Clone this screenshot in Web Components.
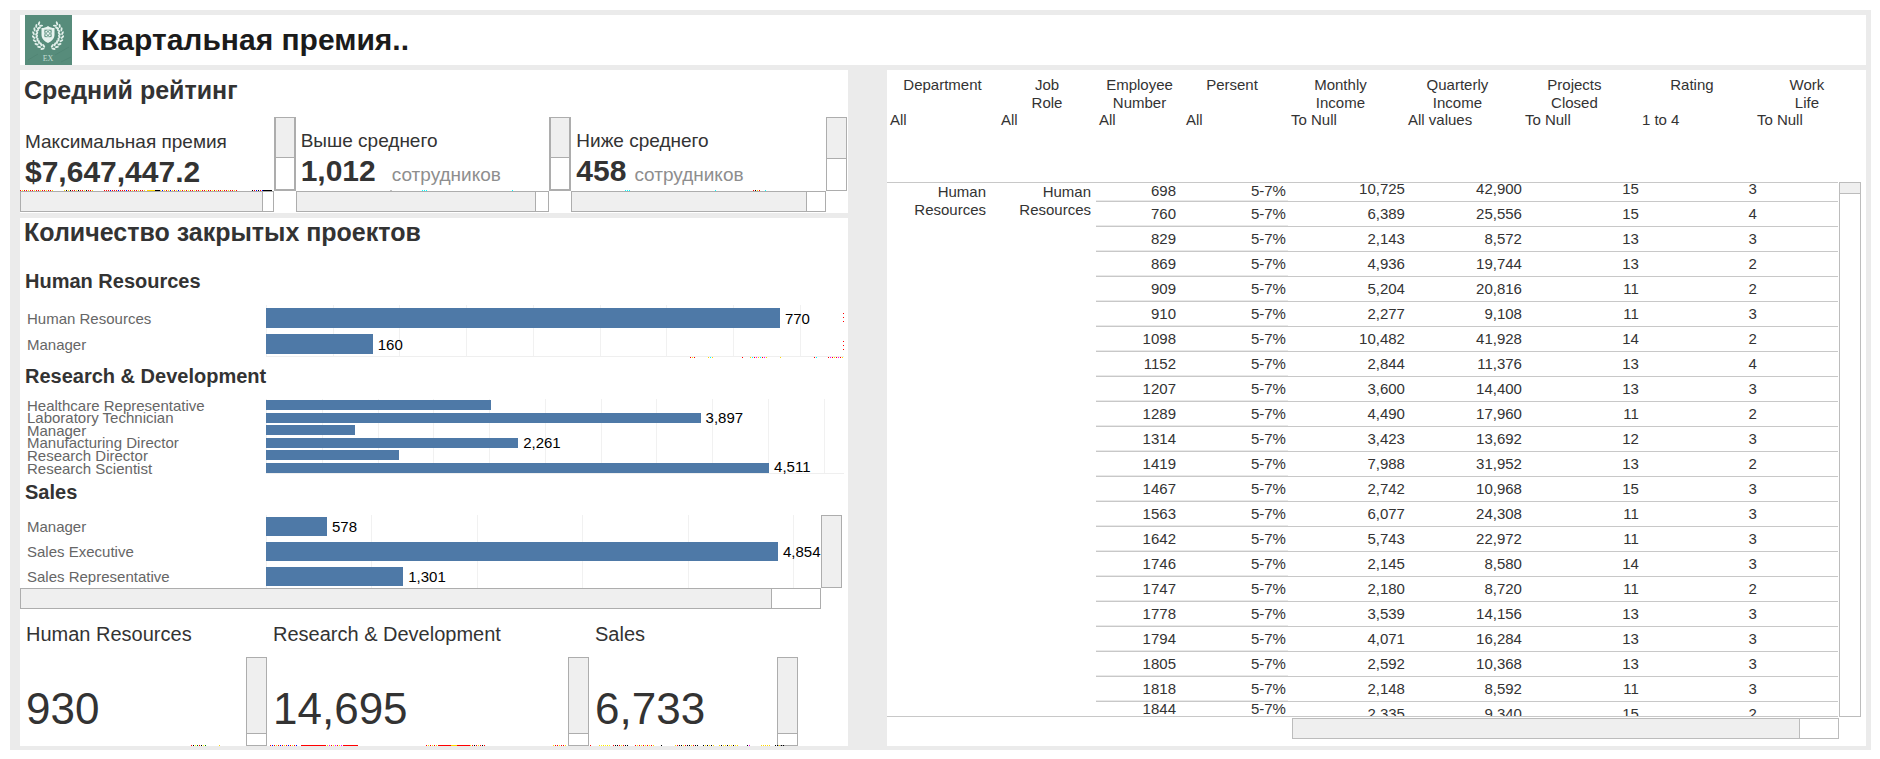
<!DOCTYPE html>
<html lang="ru">
<head>
<meta charset="utf-8">
<meta name="viewport" content="width=device-width, initial-scale=1">
<title>Квартальная премия</title>
<style>
  body {
    margin: 10px 9px 9px 10px;
    background: #fff;
    color: #333;
    font-family: "Liberation Sans", Arial, sans-serif;
    font-size: 15px;
  }
</style>
</head>
<body>
<bonus-dashboard>
  <dash-header slot="header">Квартальная премия..</dash-header>

  <dash-panel slot="rating" heading="Средний рейтинг" class="spaced">
    <kpi-row>
      <kpi-card label="Максимальная премия" value="$7,647,447.2" thumb="96" heavy class="low"
        marks="0-34:red,gold,red;44-52:gold,black;52-74:red,red,gold,black;84-110:red,red,red,blue;110-126:red,gold,red;127-135:gold*;135-140:black*;140-166:gold,blue,gold,red;166-196:red,yellow,red;196-218:gold,red,red;232-243:black,red,blue;243-252:black*"></kpi-card>
      <kpi-card label="Выше среднего" value="1,012" unit="сотрудников" thumb="95" wide heavy
        marks="94-96:silver*;126-132:cyan;216-217:cyan"></kpi-card>
      <kpi-card label="Ниже среднего" value="458" unit="сотрудников" thumb="93"
        marks="54-60:cyan;144-145:cyan;182-189:red,black,gold;194-195:cyan"></kpi-card>
    </kpi-row>
  </dash-panel>

  <dash-panel slot="projects" heading="Количество закрытых проектов">
    <bar-chart heading="Human Resources" row="26" bar="20" span="866" step="100" class="first"
      data="Human Resources|770|1;Manager|160|1"
      marks="424-429:red,gold;442-448:gold,cyan;476-477:red;484-502:gold,cyan,red,magenta;514-515:gold;548-552:red,cyan;562-578:red,magenta,red,gold"
      side></bar-chart>
    <bar-chart heading="Research &amp; Development" dense bar="10" span="5183" step="500"
      data="Healthcare Representative|2018|0;Laboratory Technician|3897|1;Manager|798|0;Manufacturing Director|2261|1;Research Director|1193|0;Research Scientist|4511|1"></bar-chart>
    <bar-chart heading="Sales" scroll row="25" bar="19" span="5262" step="1000"
      data="Manager|578|1;Sales Executive|4854|1;Sales Representative|1301|1"></bar-chart>
    <total-row>
      <total-card label="Human Resources" value="930" marks="171-186:red,black,yellow,green;199-200:gold"></total-card>
      <total-card label="Research &amp; Development" value="14,695"
        marks="3-30:red,blue,red,gold;34-58:red*;58-76:red,gold,magenta;76-91:red*;159-171:red,gold;171-184:red*;184-190:gold*;190-203:red*;203-219:gold,red,black,red;286-300:gold,red,red"></total-card>
      <total-card label="Sales" value="6,733"
        marks="1-2:red;10-22:gold,yellow;24-40:red,black,black,red,gold;46-66:red,gold;72-74:black;86-110:gold,red,black,black;114-126:black,gold;130-150:gold,black,gold;158-162:black,magenta;172-182:gold;186-196:black,black,gold"></total-card>
    </total-row>
  </dash-panel>

  <employee-table slot="table"></employee-table>
</bonus-dashboard>

<script>
class Base extends HTMLElement {
  connectedCallback() {
    if (this.shadowRoot) return;
    this.attachShadow({ mode: 'open' }).innerHTML = this.render();
  }
  attr(name, fallback = '') {
    const v = this.getAttribute(name);
    return (v === null ? fallback : v).replace(/&/g, '&amp;');
  }
}

/* One-pixel strip of coloured specks. Format: "from-to:colours;…"; a trailing * makes the run solid. */
customElements.define('edge-specks', class extends Base {
  render() {
    const rects = this.attr('marks').split(';').filter(Boolean).map(run => {
      const [range, names] = run.split(':');
      const [from, to] = range.split('-').map(Number);
      if (names.endsWith('*')) return `<rect x="${from}" y="0" width="${to - from}" height="1" fill="${names.slice(0, -1)}"/>`;
      const colours = names.split(',');
      let out = '';
      for (let x = from, i = 0; x < to; x += 2, i++)
        out += `<rect x="${x}" y="0" width="1" height="1" fill="${colours[i % colours.length]}"/>`;
      return out;
    }).join('');
    return `<style>
      :host { display: block; height: 1px; overflow: hidden; pointer-events: none; }
      svg { display: block; width: 100%; height: 1px; }
    </style><svg aria-hidden="true" shape-rendering="crispEdges">${rects}</svg>`;
  }
});

customElements.define('scroll-track', class extends Base {
  render() {
    const vertical = this.hasAttribute('vertical');
    const size = this.attr('thumb', '90');
    this.setAttribute('role', 'scrollbar');
    this.setAttribute('aria-orientation', vertical ? 'vertical' : 'horizontal');
    return `<style>
      :host { display: block; box-sizing: border-box; background: #fff;
        border: 1px solid var(--edge, #adadad); ${vertical ? 'width: 21px' : 'height: 21px'}; }
      :host([heavy]) { width: 22px; border-width: 1px 2px 2px; }
      .thumb { box-sizing: border-box; background: #efefef; border: 0 solid var(--edge, #adadad);
        ${vertical ? `height: ${size}%; border-bottom-width: 1px` : `width: ${size}%; height: 100%; border-right-width: 1px`}; }
      :host([full]) .thumb { border-width: 0; }
    </style><div class="thumb"></div>`;
  }
});

customElements.define('brand-logo', class extends Base {
  render() {
    let leaves = '';
    for (let i = 0; i < 9; i++) {
      const t = (22 + i * 15) * Math.PI / 180;
      for (const side of [1, -1]) {
        for (const k of [-1, 1]) {
          const r = 13 + k * 1.6;
          const x = 23 + side * r * Math.sin(t), y = 20 + r * Math.cos(t) * 1.02;
          const turn = Math.atan2(-Math.sin(t), side * Math.cos(t)) * 180 / Math.PI + side * k * 32;
          leaves += `<ellipse cx="${x.toFixed(1)}" cy="${y.toFixed(1)}" rx="2.1" ry="1" transform="rotate(${turn.toFixed(0)} ${x.toFixed(1)} ${y.toFixed(1)})"/>`;
        }
      }
    }
    return `<style>
      :host { display: block; width: 47px; height: 50px; }
      svg { display: block; }
      text { font: 8px "Liberation Serif", serif; fill: #c3dcd2; }
    </style>
    <svg width="47" height="50" viewBox="0 0 47 50" role="img" aria-label="EX">
      <rect width="47" height="50" fill="#578c7b"/>
      <path d="M3 45 13 39M30 40 44 32M36 47l10-5" stroke="#4d8171" stroke-width=".6"/>
      <g fill="#e3f0eb">${leaves}</g>
      <path d="M23 11c2 1.400 4 2 6.500 2v6.500c0 4-2.500 6.800-6.500 8.500-4-1.700-6.500-4.500-6.500-8.500v-6.500c2.500 0 4.500-.6 6.500-2z" fill="#e9f4f0"/>
      <g fill="none" stroke="#5d9180" stroke-width=".8">
        <ellipse cx="23" cy="18.500" rx="4.200" ry="1.600" transform="rotate(45 23 18.500)"/>
        <ellipse cx="23" cy="18.500" rx="4.200" ry="1.600" transform="rotate(-45 23 18.500)"/>
        <path d="M19.500 14.800h7v7h-7z" stroke-width=".4"/>
      </g>
      <text x="23" y="46" text-anchor="middle">EX</text>
    </svg>`;
  }
});

customElements.define('dash-header', class extends Base {
  render() {
    return `<style>
      :host { display: flex; align-items: center; gap: 9px; height: 50px; padding-left: 5px; background: #fff; color: #1b1b1b; }
      h1 { margin: 0; font-size: 30px; line-height: 34px; white-space: nowrap; }
    </style><brand-logo></brand-logo><h1><slot></slot></h1>`;
  }
});

customElements.define('dash-panel', class extends Base {
  render() {
    return `<style>
      :host { display: block; background: #fff; }
      h2 { margin: 0; padding-left: 4px; font-size: 25px; line-height: 28px; white-space: nowrap; }
      :host(.spaced) { padding: 6px 0 1px; }
      :host(.spaced) h2 { padding-bottom: 13px; }
    </style><h2>${this.attr('heading')}</h2><slot></slot>`;
  }
});

customElements.define('kpi-row', class extends Base {
  render() {
    return `<style>:host { display: grid; grid-template-columns: repeat(3, 1fr); padding-right: 1px; }</style><slot></slot>`;
  }
});

customElements.define('kpi-card', class extends Base {
  render() {
    const unit = this.attr('unit');
    return `<style>
      :host { display: grid; grid-template-columns: 1fr auto; grid-template-rows: 74px auto; }
      .body { position: relative; box-sizing: border-box; padding: 13px 0 0 5px; white-space: nowrap; min-width: 0; }
      :host(.low) .body { padding-top: 14px; }
      .label { font-size: 19px; line-height: 22px; }
      .line { display: flex; align-items: baseline; gap: 8px; padding-top: 2px; line-height: 34px; }
      :host([wide]) .line { gap: 16px; }
      b { font-size: 30px; }
      .unit { font-size: 19px; color: #8e8e8e; }
      edge-specks { position: absolute; left: 0; right: 0; bottom: 0; }
    </style>
    <div class="body">
      <div class="label">${this.attr('label')}</div>
      <div class="line"><b>${this.attr('value')}</b>${unit ? `<span class="unit">${unit}</span>` : ''}</div>
      <edge-specks marks="${this.attr('marks')}"></edge-specks>
    </div>
    <scroll-track vertical thumb="57" ${this.hasAttribute('heavy') ? 'heavy' : ''}></scroll-track>
    <scroll-track thumb="${this.attr('thumb')}"></scroll-track>`;
  }
});

customElements.define('bar-chart', class extends Base {
  render() {
    const span = +this.attr('span'), step = +this.attr('step');
    const scroll = this.hasAttribute('scroll');
    const items = this.attr('data').replace(/&amp;/g, '&').split(';').map(r => r.split('|'));
    let grid = '';
    for (let v = 0; v < span; v += step) grid += `<i style="left:${v / span * 100}%"></i>`;
    const rows = items.map(([name, value, show]) => `
      <div class="row"><span class="name">${name}</span><div class="lane">
        <div class="bar" style="width:${value / span * 100}%"></div>${show === '1' ? `<span class="value">${(+value).toLocaleString('en-US')}</span>` : ''}
      </div></div>`).join('');
    return `<style>
      :host { display: block; padding-top: 6px; }
      :host(.first) { padding-top: 23px; }
      h3 { margin: 0 0 11px; padding-left: 5px; font-size: 20px; line-height: 24px; white-space: nowrap; }
      :host(.first) h3 { margin-bottom: 12px; }
      .view { display: flex; padding-right: ${scroll ? 6 : 4}px; }
      .chart { position: relative; flex: 1; display: grid; overflow: hidden; align-content: center;
        grid-auto-rows: ${this.attr('row', '25')}px; height: ${scroll ? '73px' : 'auto'}; }
      :host([dense]) .chart { height: 75px; grid-auto-rows: 1fr; align-content: stretch; overflow: visible; }
      .grid { position: absolute; inset: 0 0 0 246px; ${scroll ? '' : 'border-bottom: 1px solid #efefef;'} }
      .grid i { position: absolute; top: 0; bottom: 0; width: 1px; background: #f1f1f1; }
      .row { position: relative; display: grid; grid-template-columns: 246px 1fr; align-items: center; min-height: 0; height: 100%; }
      .name { padding-left: 7px; color: #666; white-space: nowrap; line-height: 17px; }
      .lane { display: flex; align-items: center; gap: 5px; height: 100%; min-width: 0; }
      :host([dense]) .name, :host([dense]) .value { margin: -4px 0; }
      :host([dense]) .row:last-of-type .value { align-self: flex-end; margin-bottom: 0; }
      .bar { flex: none; height: ${this.attr('bar')}px; background: #4e79a7; }
      .value { color: #000; line-height: 17px; }
      .side { position: absolute; right: 0; top: 8px; width: 1px; height: 40px;
        background: repeating-linear-gradient(#f00 0 1px, #fff 1px 4px); }
      .side::after { content: ""; position: absolute; inset: 12px 0 13px; background: #fff; }
      .foot { padding-left: 246px; }
    </style>
    <h3>${this.attr('heading')}</h3>
    <div class="view">
      <div class="chart"><div class="grid">${grid}</div>${rows}${this.hasAttribute('side') ? '<div class="side"></div>' : ''}</div>
      ${scroll ? '<scroll-track vertical full thumb="100"></scroll-track>' : ''}
    </div>
    ${scroll ? '<div style="padding-right:27px"><scroll-track thumb="94"></scroll-track></div>'
      : this.hasAttribute('marks') ? `<div class="foot"><edge-specks marks="${this.attr('marks')}"></edge-specks></div>` : ''}`;
  }
});

customElements.define('total-row', class extends Base {
  render() {
    return `<style>:host { display: grid; grid-template-columns: 247fr 322fr 209fr; padding: 13px 50px 0 0; }</style><slot></slot>`;
  }
});

customElements.define('total-card', class extends Base {
  render() {
    return `<style>
      :host { display: block; white-space: nowrap; min-width: 0; }
      .label { padding: 0 0 11px 6px; font-size: 20px; line-height: 24px; }
      .body { position: relative; display: flex; justify-content: space-between; }
      .value { padding: 27px 0 12px 6px; font-size: 44px; line-height: 50px; }
      edge-specks { position: absolute; left: 0; right: 0; bottom: 0; }
    </style>
    <div class="label">${this.attr('label')}</div>
    <div class="body"><span class="value">${this.attr('value')}</span>
      <edge-specks marks="${this.attr('marks')}"></edge-specks>
      <scroll-track vertical thumb="87"></scroll-track></div>`;
  }
});

customElements.define('employee-table', class extends Base {
  render() {
    const widths = [111, 98, 87, 105, 117, 117, 117, 118, 81];
    const total = widths.reduce((a, b) => a + b);
    const heads = ['Department', 'Job<br>Role', 'Employee<br>Number', 'Persent', 'Monthly<br>Income',
      'Quarterly<br>Income', 'Projects<br>Closed', 'Rating', 'Work<br>Life'];
    const filters = ['All', 'All', 'All', 'All', 'To Null', 'All values', 'To Null', '1 to 4', 'To Null'];
    const rows = `698 10,725 42,900 15 3
760 6,389 25,556 15 4
829 2,143 8,572 13 3
869 4,936 19,744 13 2
909 5,204 20,816 11 2
910 2,277 9,108 11 3
1098 10,482 41,928 14 2
1152 2,844 11,376 13 4
1207 3,600 14,400 13 3
1289 4,490 17,960 11 2
1314 3,423 13,692 12 3
1419 7,988 31,952 13 2
1467 2,742 10,968 15 3
1563 6,077 24,308 11 3
1642 5,743 22,972 11 3
1746 2,145 8,580 14 3
1747 2,180 8,720 11 2
1778 3,539 14,156 13 3
1794 4,071 16,284 13 3
1805 2,592 10,368 13 3
1818 2,148 8,592 11 3
1844 2,335 9,340 15 2`.split('\n').map(r => r.split(' '));
    const body = rows.map(([id, ...nums], i) => `<tr>${i ? '' :
      `<th scope="rowgroup" rowspan="${rows.length}" class="group">Human<br>Resources</th><th scope="rowgroup" rowspan="${rows.length}" class="group role">Human<br>Resources</th>`}
      <td class="id">${id}</td><td class="pct">5-7%</td>${nums.map(n => `<td class="num"><span>${n}</span></td>`).join('')}<td></td></tr>`).join('');
    return `<style>
      :host { display: grid; grid-template-columns: 405fr 547fr 22px; grid-template-rows: auto auto 1fr;
        padding: 0 5px 6px 0; background: #fff; }
      .table { grid-column: 1 / 3; padding-right: 1px; min-width: 0; }
      table { width: 100%; table-layout: fixed; border-spacing: 0; line-height: 16px; }
      th, td { padding: 0; font-weight: normal; text-align: right; white-space: nowrap; }
      thead th { height: 36px; padding-top: 6px; line-height: 18px; text-align: center; vertical-align: top; }
      thead th:nth-child(n+5) { padding-right: 12px; }
      thead th:nth-child(4) { padding-right: 7px; }
      thead th:last-child { padding: 6px 0 0 19px; }
      thead td { padding: 0 0 54px 3px; text-align: left; border-bottom: 1px solid #c8c8c8; }
      thead td:last-child { padding-left: 0; }
      tbody td { height: 24px; border-bottom: 1px solid #c8c8c8; }
      tbody .group { line-height: 18px; vertical-align: top; padding-right: 12px; border-bottom: 1px solid #c8c8c8; }
      tbody .role { padding-right: 5px; }
      .id { padding-right: 7px; box-shadow: inset 0 -1px #e9e9e9; }
      .pct { padding-right: 2px; box-shadow: inset 0 -1px #e9e9e9; }
      /* the first and the last row are cut by the edges of the scrolled view */
      tbody tr:first-child td { height: 18px; vertical-align: top; }
      tbody tr:first-child .num { line-height: 12px; }
      tbody tr:last-child td { height: 14px; vertical-align: top; line-height: 14px; box-shadow: none; }
      .num span { display: block; }
      tbody tr:last-child .num span { height: 14px; line-height: 24px; overflow: hidden; }
      scroll-track { --edge: #bcbcbc; }
      .down { padding-top: 112px; display: flex; }
      .down scroll-track { width: 22px; }
      .across { grid-column: 2; padding-top: 1px; }
    </style>
    <div class="table"><table>
      <colgroup>${widths.map(w => `<col style="width:${w / total * 100}%">`).join('')}</colgroup>
      <thead><tr>${heads.map(h => `<th scope="col">${h}</th>`).join('')}</tr>
      <tr>${filters.map(f => `<td>${f}</td>`).join('')}</tr></thead>
      <tbody>${body}</tbody></table></div>
    <div class="down"><scroll-track vertical thumb="2"></scroll-track></div>
    <div class="across"><scroll-track thumb="93"></scroll-track></div>`;
  }
});

/* Widths and heights of the four areas. */
customElements.define('bonus-dashboard', class extends Base {
  render() {
    return `<style>
      :host { display: grid; gap: 5px 39px; padding: 5px 5px 4px 10px; background: #ebebeb;
        grid-template-columns: 828fr 979fr; grid-template-rows: auto auto 1fr; }
      slot { display: contents; }
      ::slotted([slot=header]) { grid-column: 1 / -1; }
      ::slotted([slot=rating]), ::slotted([slot=projects]) { grid-column: 1; min-width: 0; }
      ::slotted([slot=table]) { grid-column: 2; grid-row: 2 / 4; min-width: 0; }
    </style>
    <slot name="header"></slot><slot name="rating"></slot><slot name="projects"></slot><slot name="table"></slot>`;
  }
});
</script>
</body>
</html>
